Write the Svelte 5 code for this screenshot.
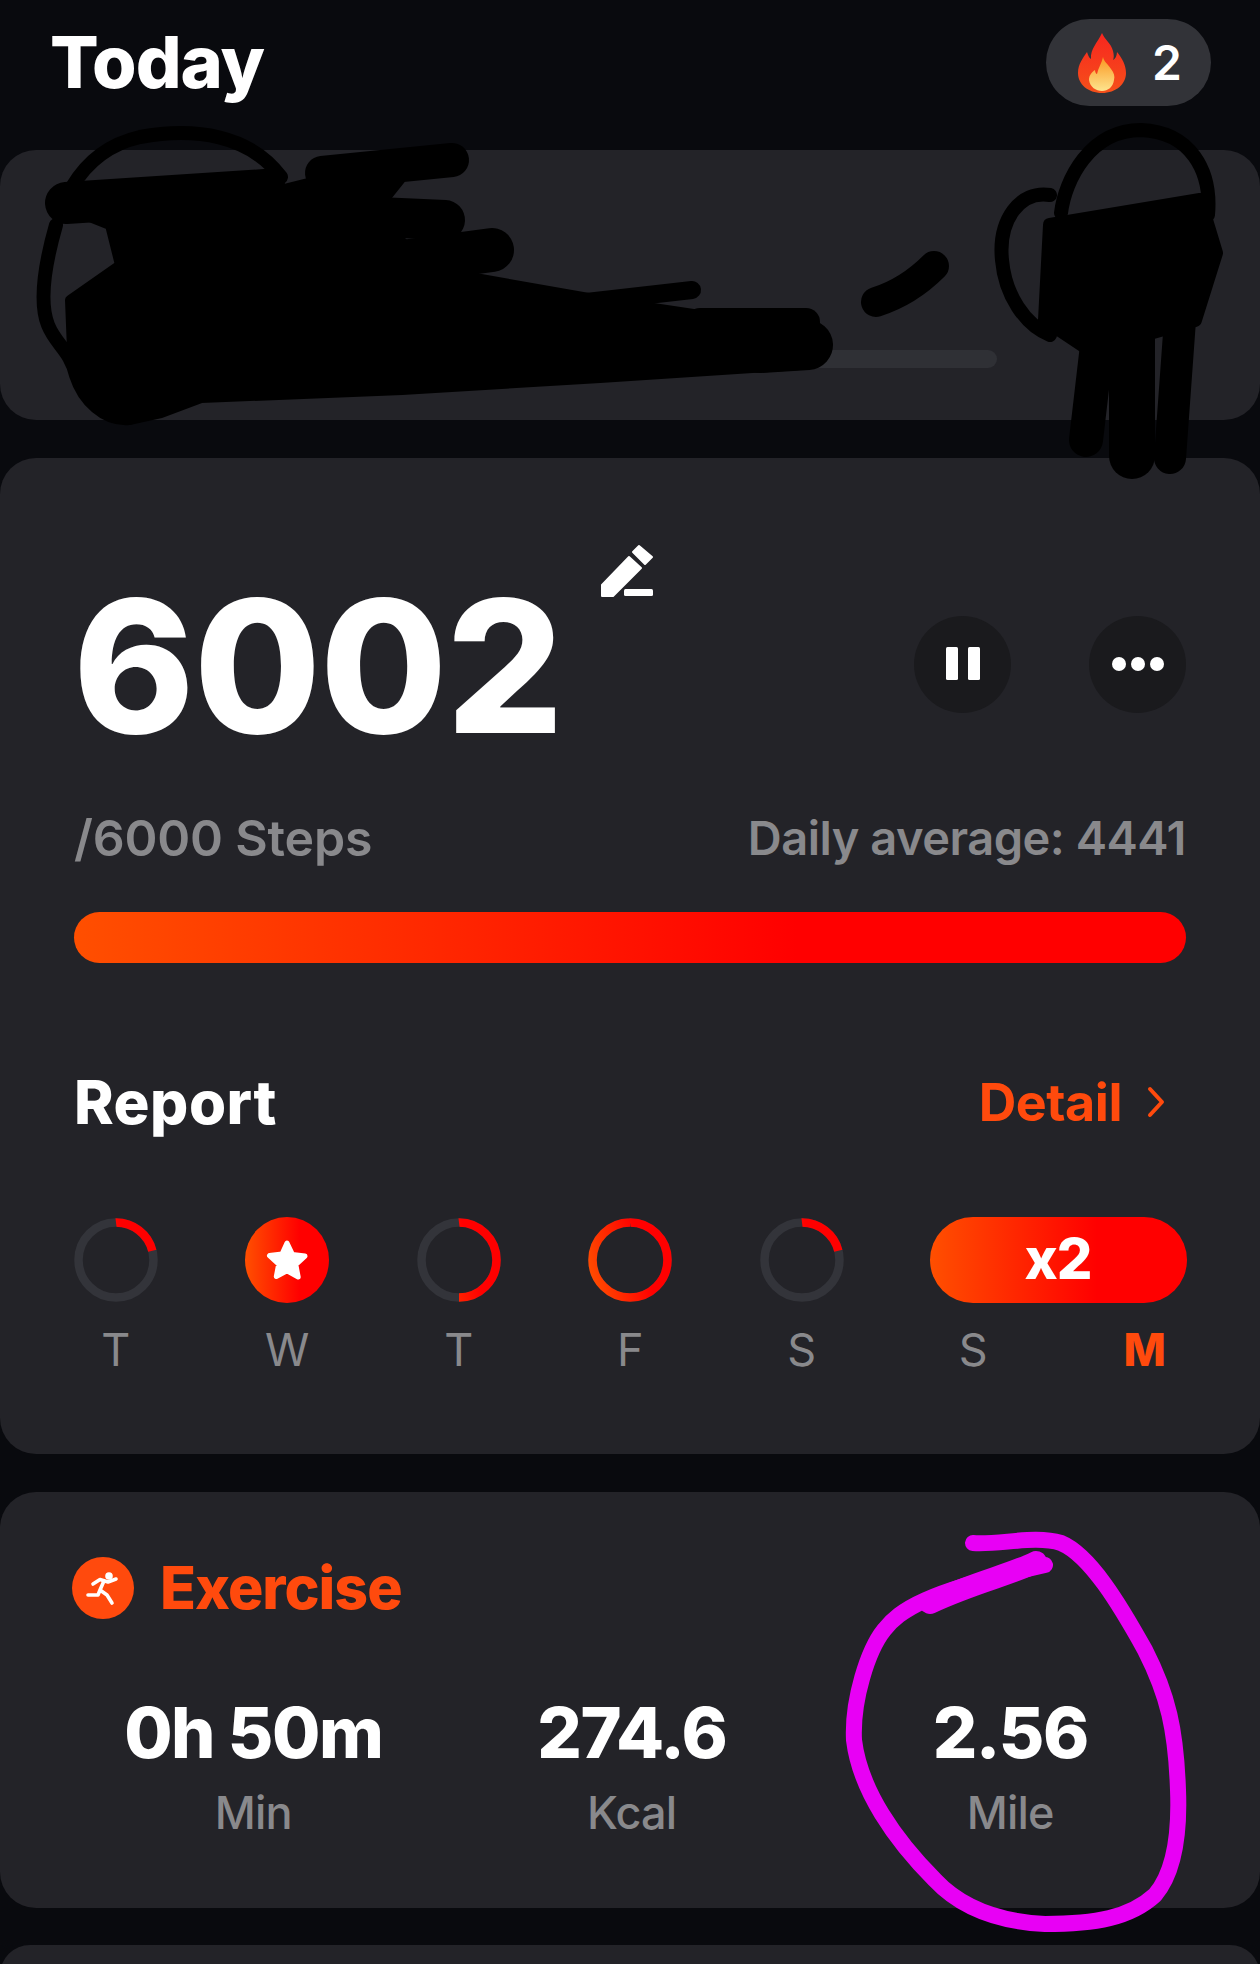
<script lang="ts">
  type Day = { label: string; pct?: number; star?: boolean };

  const days: Day[] = [
    { label: 'T', pct: 21 },
    { label: 'W', star: true },
    { label: 'T', pct: 50 },
    { label: 'F', pct: 100 },
    { label: 'S', pct: 21 }
  ];

  const stats = [
    { value: '0h 50m', unit: 'Min' },
    { value: '274.6', unit: 'Kcal' },
    { value: '2.56', unit: 'Mile' }
  ];
</script>

<svg width="0" height="0" class="defs" aria-hidden="true">
  <defs>
    <linearGradient id="fire" x1="0" y1="0" x2="1" y2="0">
      <stop offset="0" stop-color="#ff4f00" />
      <stop offset="0.65" stop-color="#ff0000" />
    </linearGradient>
    <linearGradient id="ringfire" gradientUnits="userSpaceOnUse" x1="4" y1="60" x2="70" y2="42">
      <stop offset="0" stop-color="#ff4a00" />
      <stop offset="0.8" stop-color="#ff0000" />
    </linearGradient>
    <linearGradient id="flame" x1="0" y1="0" x2="0" y2="1">
      <stop offset="0" stop-color="#f8261f" />
      <stop offset="1" stop-color="#f5501a" />
    </linearGradient>
    <linearGradient id="flamecore" x1="0" y1="0" x2="0" y2="1">
      <stop offset="0" stop-color="#fb9620" />
      <stop offset="1" stop-color="#fde48e" />
    </linearGradient>
  </defs>
</svg>

<div class="page">
  <header class="top">
    <h1>Today</h1>
    <div class="streak">
      <svg width="48" height="60" viewBox="0 0 48 60" aria-hidden="true">
        <path fill="url(#flame)" d="M24 0c3 7 9 10 11 18 1 4 1 7 0 9 2-1 4-4 4-8 5 6 9 13 9 21 0 11-10 20-24 20S0 51 0 40c0-9 5-15 9-21 1 3 2 6 4 7C12 16 20 9 24 0z" />
        <path fill="url(#flamecore)" d="M25 24c1 5 5 7 8 12 3 4 4 7 3 11-1 7-6 11-12 11s-12-4-13-11c0-5 3-8 6-10 0 2 1 4 2 4 1-6 5-11 6-17z" />
      </svg>
      <span>2</span>
    </div>
  </header>

  <section class="card plan">
    <div class="track"><div class="track-fill"></div></div>
  </section>

  <section class="card steps">
    <div class="hero">
      <div class="count">
        6002
        <svg class="pencil" width="60" height="60" viewBox="0 0 60 60" aria-hidden="true">
          <path fill="#fff" stroke="#fff" stroke-width="2" stroke-linejoin="round" d="M31 15l12 11-28 28H4V43zM41 4l13 11-7 7-12-12z" />
          <rect x="26" y="47" width="29" height="7" rx="1.5" fill="#fff" />
        </svg>
      </div>
      <div class="controls">
        <button type="button" aria-label="Pause">
          <svg width="34" height="34" viewBox="0 0 34 34" aria-hidden="true">
            <rect x="0" y="0" width="12" height="33" rx="1.5" fill="#fff" />
            <rect x="22" y="0" width="12" height="33" rx="1.5" fill="#fff" />
          </svg>
        </button>
        <button type="button" aria-label="More">
          <svg width="54" height="16" viewBox="0 0 54 16" aria-hidden="true">
            <circle cx="8" cy="8" r="7" fill="#fff" />
            <circle cx="27" cy="8" r="7" fill="#fff" />
            <circle cx="46" cy="8" r="7" fill="#fff" />
          </svg>
        </button>
      </div>
    </div>

    <div class="goal">
      <span class="target">/6000 Steps</span>
      <span class="average">Daily average: 4441</span>
    </div>
    <div class="bar"></div>

    <div class="report">
      <h2>Report</h2>
      <div class="detail">
        Detail
        <svg width="20" height="34" viewBox="0 0 20 34" aria-hidden="true">
          <path d="M4 4l12 13L4 30" fill="none" stroke="#ff4a0d" stroke-width="4" stroke-linecap="round" stroke-linejoin="round" />
        </svg>
      </div>
    </div>

    <div class="week">
      {#each days as day}
        <div class="mark">
          {#if day.star}
            <svg width="84" height="86" viewBox="0 0 84 86" aria-hidden="true">
              <ellipse cx="42" cy="43" rx="42" ry="43" fill="url(#fire)" />
              <path fill="#fff" stroke="#fff" stroke-width="5" stroke-linejoin="round" d="M42 26l5.500 11.500 12.500 1.600-9.200 8.500 2.400 12.400L42 53.800l-10.700 5.700 2.400-12.400-9.200-8.500 12.500-1.600z" />
            </svg>
          {:else}
            <svg width="84" height="86" viewBox="0 0 84 86" aria-hidden="true">
              <circle cx="42" cy="43" r="37.500" fill="none" stroke="#33343a" stroke-width="8.500" />
              <circle
                cx="42"
                cy="43"
                r="37.500"
                fill="none"
                stroke="url(#ringfire)"
                stroke-width="8.500"
                pathLength="100"
                stroke-dasharray="{day.pct} {100 - (day.pct ?? 0)}"
                stroke-dashoffset="25"
              />
            </svg>
          {/if}
        </div>
      {/each}
      <div class="mark wide">x2</div>

      {#each days as day}
        <div class="day">{day.label}</div>
      {/each}
      <div class="day">S</div>
      <div class="day today">M</div>
    </div>
  </section>

  <section class="card exercise">
    <div class="ex-head">
      <span class="ex-icon">
        <svg width="62" height="62" viewBox="0 0 62 62" aria-hidden="true">
          <circle cx="37" cy="19" r="3.800" fill="#fff" />
          <path d="M21 27l7-4.500 8 2.500 8-3M31.500 25L28 33l-2 5H16M28 33l7 5 5 8" fill="none" stroke="#fff" stroke-width="3.600" stroke-linecap="round" stroke-linejoin="round" />
        </svg>
      </span>
      <h2>Exercise</h2>
    </div>
    <div class="stats">
      {#each stats as stat}
        <div class="stat">
          <div class="value">{stat.value}</div>
          <div class="unit">{stat.unit}</div>
        </div>
      {/each}
    </div>
  </section>

  <section class="card rest"></section>

  <!-- pen marks drawn over the screenshot -->
  <svg class="marks" width="1260" height="1964" viewBox="0 0 1260 1964" aria-hidden="true">
    <g fill="#000" stroke="#000" stroke-linejoin="round" stroke-linecap="round">
      <path stroke-width="10" d="M60 205L260 195 340 175 400 180 380 205 400 240 430 270 600 300 800 330 800 365 600 378 402 390 201 398 161 413 129 420 95 400 72 350 70 300 120 265 110 225z" />
      <path fill="none" stroke-width="42" d="M66 203L265 190" />
      <path fill="none" stroke-width="34" d="M322 173L452 160" />
      <path fill="none" stroke-width="40" d="M378 217L445 220" />
      <path fill="none" stroke-width="44" d="M402 262L492 250" />
      <path fill="none" stroke-width="18" d="M560 305L692 290" />
      <path fill="none" stroke-width="28" d="M700 322L806 322" />
      <path fill="none" stroke-width="50" d="M760 348L808 345" />
      <path fill="none" stroke-width="14" d="M72 187C85 165 105 145 140 137 195 127 250 135 281 177M56 225C46 260 38 300 48 325 56 345 70 350 76 375 84 400 105 420 129 418" />
      <path fill="none" stroke-width="30" d="M934 266C915 285 895 296 876 302" />
      <path stroke-width="14" d="M1050 225L1200 200 1216 253 1195 320 1090 350 1045 320z" />
      <path fill="none" stroke-width="34" d="M1100 320L1086 440" />
      <path fill="none" stroke-width="46" d="M1132 320L1132 456" />
      <path fill="none" stroke-width="32" d="M1180 320L1170 458" />
      <path fill="none" stroke-width="14" d="M1061 213C1065 180 1090 130 1141 130 1190 132 1212 170 1208 215M1050 195C1020 190 998 220 1002 260 1005 295 1025 325 1050 335" />
    </g>
    <g fill="none" stroke="#e800f5" stroke-linecap="round" stroke-linejoin="round">
      <path stroke-width="16" d="M973 1543C1000 1545 1035 1535 1061 1543 1090 1555 1120 1605 1145 1650 1168 1695 1176 1730 1178 1790 1180 1840 1172 1875 1155 1895 1130 1918 1095 1924 1045 1924 1005 1922 965 1912 935 1880 895 1840 860 1790 854 1740 852 1700 868 1650 884 1630 900 1610 925 1592 1045 1565" />
      <path stroke-width="22" d="M930 1603C975 1582 1010 1575 1036 1562" />
    </g>
  </svg>
</div>

<style>
  :global(body) {
    margin: 0;
    background: #090a0e;
  }

  .defs {
    position: absolute;
  }

  .page {
    position: relative;
    width: 1260px;
    height: 1964px;
    overflow: hidden;
    background: #090a0e;
    font-family: Inter, "Liberation Sans", sans-serif;
    color: #fff;
  }

  .top {
    display: flex;
    justify-content: space-between;
    align-items: flex-start;
    height: 150px;
    padding: 19px 49px 0 50px;
    box-sizing: border-box;
  }

  h1 {
    margin: 0;
    font-size: 72px;
    line-height: 86px;
    font-weight: 800;
    letter-spacing: -1px;
  }

  .streak {
    display: flex;
    align-items: center;
    gap: 26px;
    width: 165px;
    height: 87px;
    padding-left: 32px;
    box-sizing: border-box;
    border-radius: 44px;
    background: #323338;
    font-size: 48px;
    font-weight: 600;
  }

  .card {
    background: #232328;
    border-radius: 36px;
  }

  .plan {
    height: 270px;
    margin-bottom: 38px;
    padding: 200px 263px 0 74px;
    box-sizing: border-box;
  }

  .track {
    height: 18px;
    border-radius: 9px;
    background: #2f3035;
    overflow: hidden;
  }

  .track-fill {
    width: 40%;
    height: 100%;
    background: #ff4a0d;
  }

  .steps {
    height: 996px;
    margin-bottom: 38px;
    padding: 106px 74px 0;
    box-sizing: border-box;
  }

  .hero {
    display: flex;
    justify-content: space-between;
    align-items: center;
    height: 200px;
  }

  .count {
    position: relative;
    top: 2px;
    margin-left: -1px;
    font-size: 184px;
    line-height: 200px;
    font-weight: 800;
    letter-spacing: -1px;
  }

  .pencil {
    position: absolute;
    left: 525px;
    top: -24px;
  }

  .controls {
    display: flex;
    gap: 78px;
  }

  .controls button {
    display: flex;
    align-items: center;
    justify-content: center;
    width: 97px;
    height: 97px;
    padding: 0;
    border: none;
    border-radius: 50%;
    background: #1a1a1d;
  }

  .goal {
    display: flex;
    justify-content: space-between;
    margin-top: 44px;
    line-height: 60px;
    font-weight: 600;
    color: #89898c;
  }

  .target {
    font-size: 50px;
    letter-spacing: -0.2px;
  }

  .average {
    font-size: 47px;
    letter-spacing: -0.5px;
  }

  .bar {
    height: 51px;
    margin-top: 44px;
    border-radius: 26px;
    background: linear-gradient(90deg, #ff4f00, #ff0000 65%);
  }

  .report {
    display: flex;
    justify-content: space-between;
    align-items: center;
    height: 60px;
    margin-top: 109px;
  }

  .report h2 {
    margin: 0;
    font-size: 60px;
    font-weight: 800;
    letter-spacing: 0.5px;
  }

  .detail {
    display: flex;
    align-items: center;
    gap: 24px;
    padding-right: 20px;
    font-size: 52px;
    font-weight: 700;
    letter-spacing: -0.5px;
    color: #ff4a0d;
  }

  .week {
    display: grid;
    grid-template-columns: repeat(7, 171.500px);
    margin: 85px -44px 0;
    row-gap: 22px;
    justify-items: center;
  }

  .mark {
    width: 84px;
    height: 86px;
  }

  .mark svg {
    display: block;
  }

  .wide {
    grid-column: span 2;
    width: 257px;
    margin-left: -2px;
    border-radius: 43px;
    background: linear-gradient(90deg, #ff4f00, #ff0000 65%);
    font-size: 56px;
    line-height: 84px;
    font-weight: 800;
    letter-spacing: -1px;
    text-align: center;
  }

  .day {
    font-size: 45px;
    line-height: 50px;
    color: #89898c;
  }

  .day.today {
    color: #ff4a0d;
    font-weight: 800;
  }

  .exercise {
    height: 416px;
    margin-bottom: 37px;
    padding: 65px 64px 0 72px;
    box-sizing: border-box;
  }

  .ex-head {
    display: flex;
    align-items: center;
    gap: 26px;
  }

  .ex-icon {
    display: block;
    width: 62px;
    height: 62px;
    border-radius: 50%;
    background: #ff4a0d;
  }

  .ex-icon svg {
    display: block;
  }

  .ex-head h2 {
    margin: 0;
    font-size: 59px;
    line-height: 62px;
    font-weight: 800;
    letter-spacing: -1px;
    color: #ff4a0d;
  }

  .stats {
    display: grid;
    grid-template-columns: repeat(3, 378.500px);
    margin: 79px 0 0 -8px;
  }

  .stat {
    text-align: center;
  }

  .value {
    font-size: 70px;
    line-height: 70px;
    font-weight: 800;
    letter-spacing: -1.5px;
  }

  .unit {
    margin-top: 20px;
    font-size: 45px;
    line-height: 50px;
    font-weight: 500;
    letter-spacing: -0.8px;
    color: #89898c;
  }

  .rest {
    height: 60px;
  }

  .marks {
    position: absolute;
    left: 0;
    top: 0;
    pointer-events: none;
  }
</style>
